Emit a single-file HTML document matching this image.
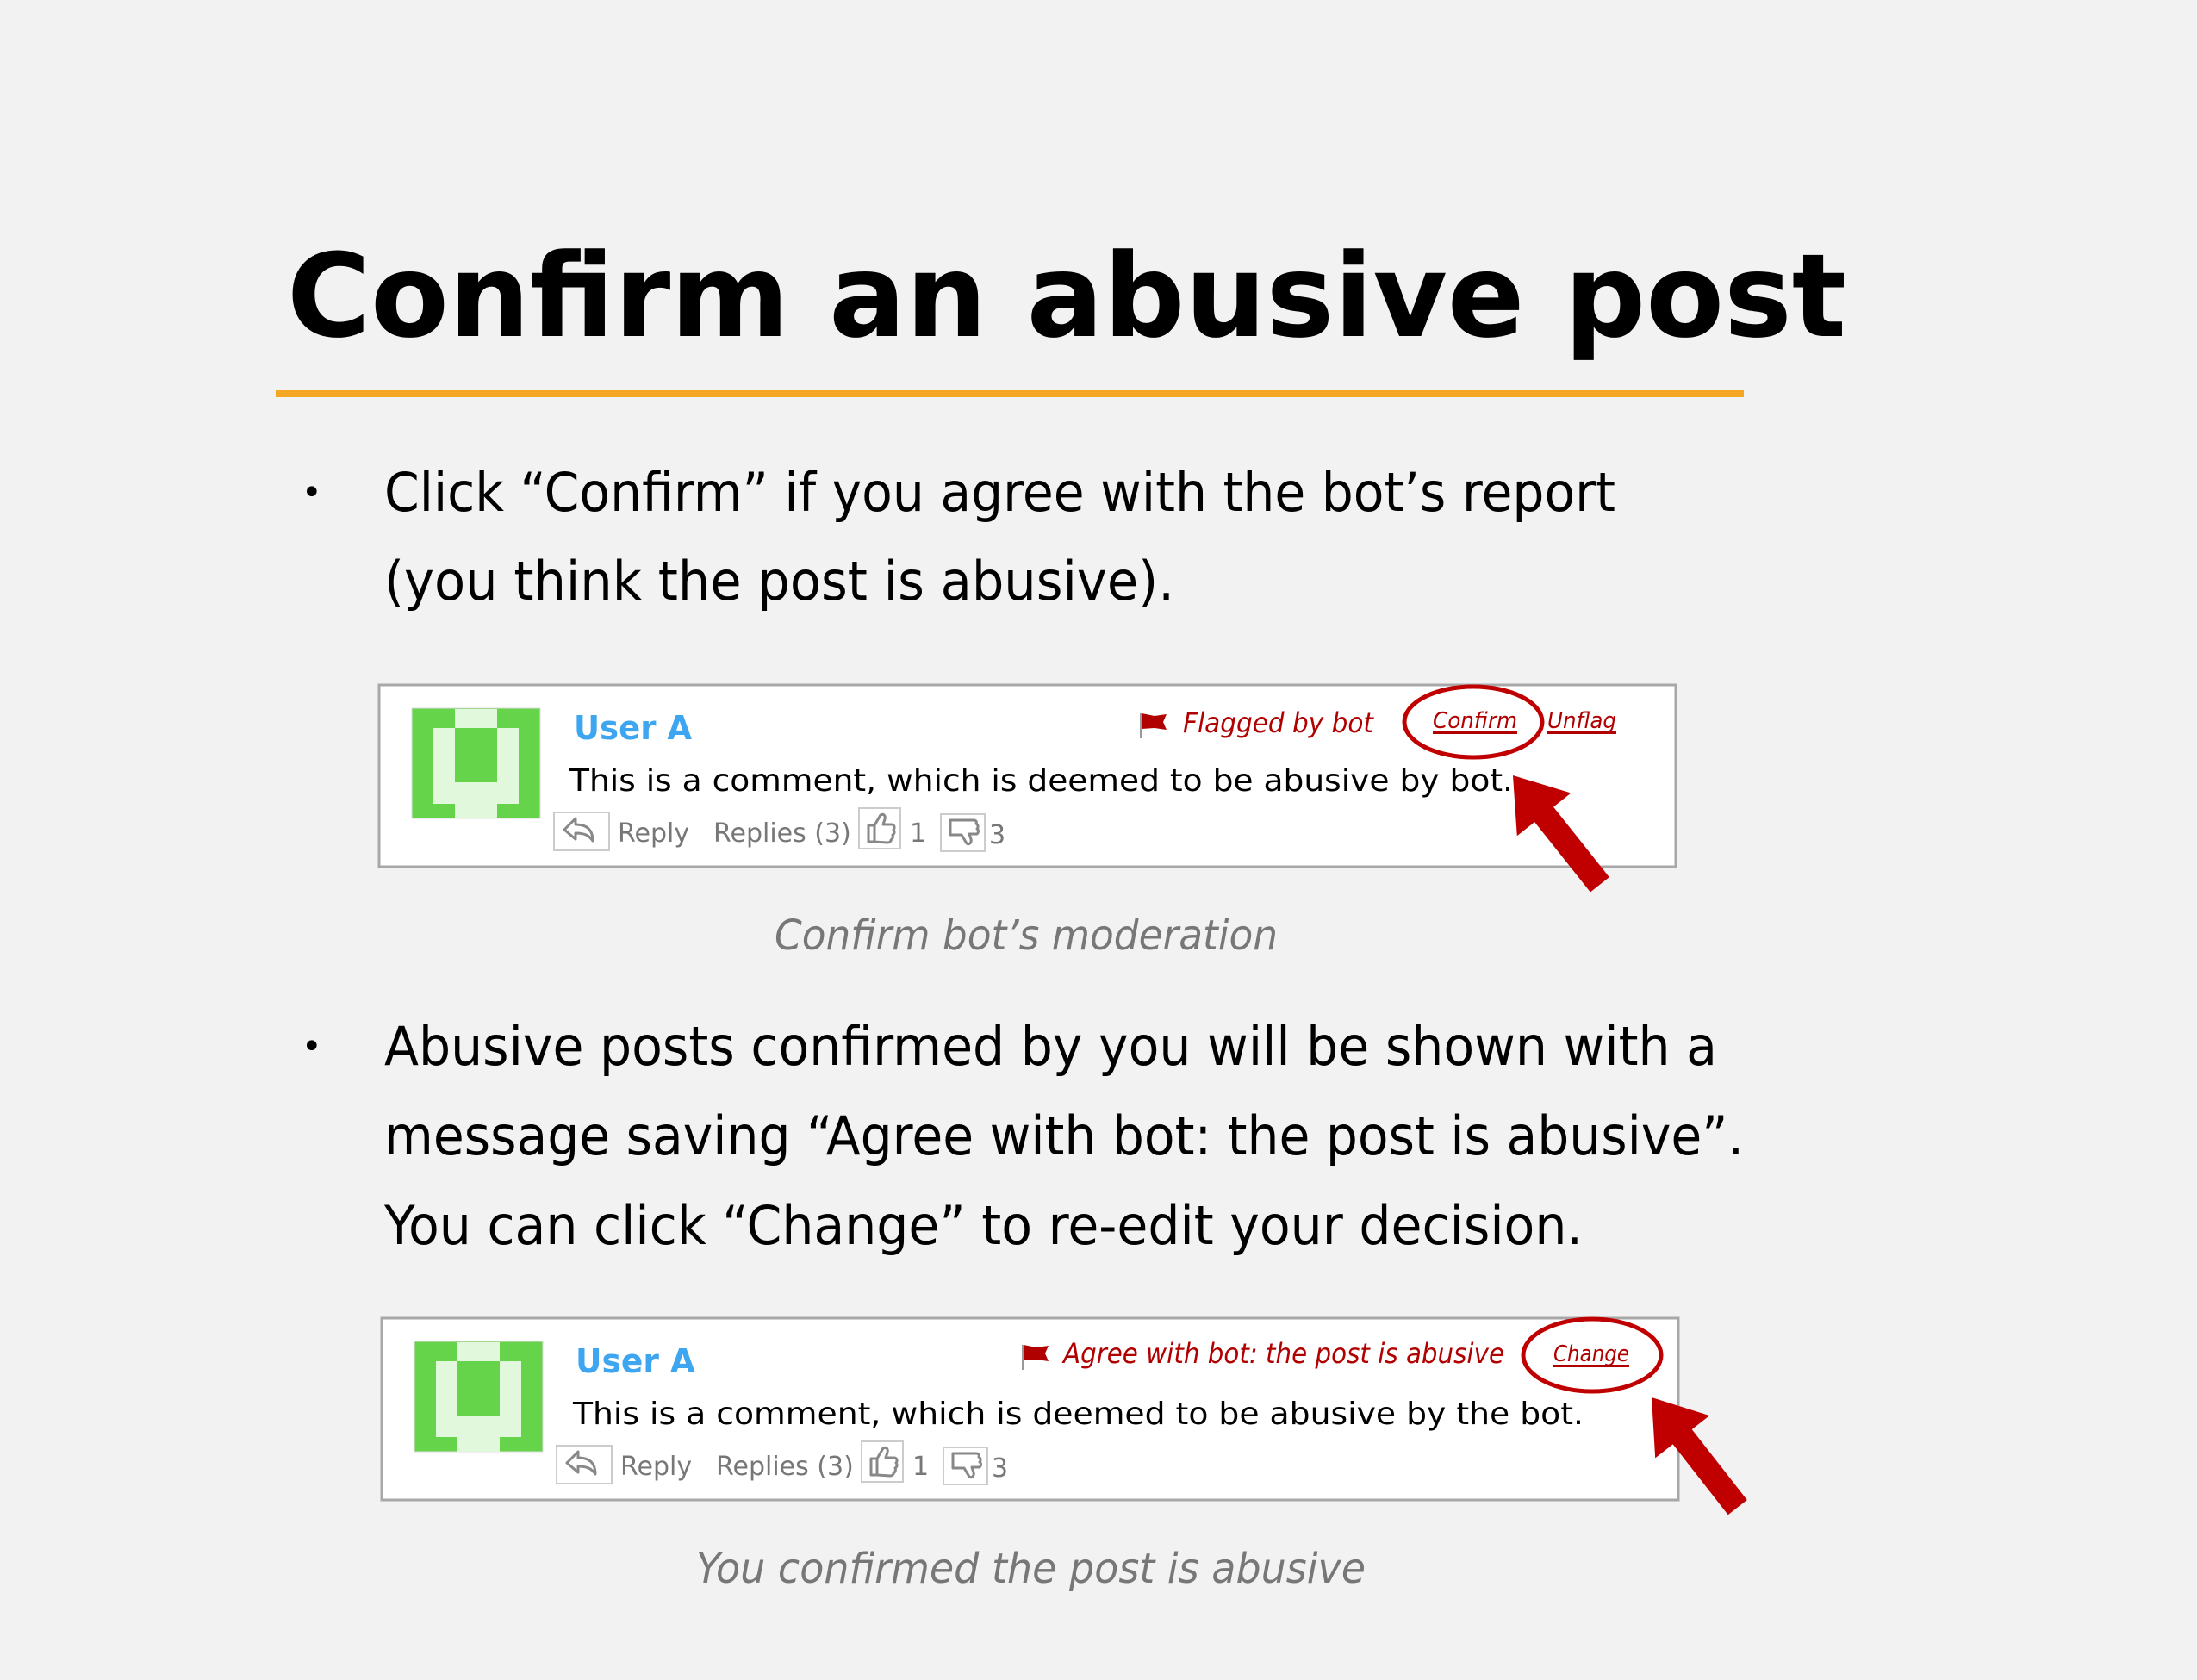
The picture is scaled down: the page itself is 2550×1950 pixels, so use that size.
<!DOCTYPE html>
<html><head><meta charset="utf-8"><style>
html,body{margin:0;padding:0;background:#f2f2f2;}
svg{display:block;}
text{font-family:"DejaVu Sans","Liberation Sans",sans-serif;}
</style></head><body>
<svg width="2550" height="1950" viewBox="0 0 2550 1950" xmlns="http://www.w3.org/2000/svg">
<rect width="2550" height="1950" fill="#f2f2f2"/>
<text x="333" y="390" font-size="134" font-weight="bold" fill="#000" textLength="1810" lengthAdjust="spacingAndGlyphs">Confirm an abusive post</text>
<rect x="320" y="453" width="1704" height="8" fill="#f5a623"/>

<g font-size="62" fill="#000">
<text x="350" y="585" font-size="40">•</text>
<text x="446" y="593" textLength="1429" lengthAdjust="spacingAndGlyphs">Click “Confirm” if you agree with the bot’s report</text>
<text x="446" y="696" textLength="917" lengthAdjust="spacingAndGlyphs">(you think the post is abusive).</text>
<text x="350" y="1228" font-size="40">•</text>
<text x="446" y="1236" textLength="1547" lengthAdjust="spacingAndGlyphs">Abusive posts confirmed by you will be shown with a</text>
<text x="446" y="1340" textLength="1578" lengthAdjust="spacingAndGlyphs">message saving “Agree with bot: the post is abusive”.</text>
<text x="446" y="1444" textLength="1391" lengthAdjust="spacingAndGlyphs">You can click “Change” to re-edit your decision.</text>
</g>

<defs>
<g id="widget">
  <rect x="440" y="795" width="1505" height="211" fill="#fff" stroke="#a8a8a8" stroke-width="3"/>
  <rect x="478" y="822" width="149" height="128" fill="#66d44a" stroke="#ddd" stroke-width="1"/>
  <rect x="528" y="823" width="49" height="22" fill="#e2f8dc"/>
  <rect x="503" y="845" width="25" height="63" fill="#e2f8dc"/>
  <rect x="577" y="845" width="25" height="63" fill="#e2f8dc"/>
  <rect x="503" y="908" width="99" height="25" fill="#e2f8dc"/>
  <rect x="528" y="933" width="49" height="17" fill="#e2f8dc"/>
  <rect x="643" y="943" width="64" height="44" fill="#fff" stroke="#ccc" stroke-width="2"/>
  <path d="M688 976 C688 962 680 957 668 957 L668 950 L655 963 L668 974 L668 967 C679 967 684 970 688 976 Z" fill="none" stroke="#888" stroke-width="3" stroke-linejoin="round"/>
  <g font-size="30" fill="#777">
    <text x="717" y="977">Reply</text>
    <text x="828" y="977">Replies (3)</text>
    <text x="1056" y="977">1</text>
    <text x="1148" y="979">3</text>
  </g>
  <rect x="997" y="938" width="48" height="47" fill="#fff" stroke="#ccc" stroke-width="2"/>
  <path d="M1008 958 L1015 958 L1015 977 L1008 977 Z M1015 958 L1022 946 C1026 944 1028 947 1027 951 L1025 957 L1035 957 C1038 957 1039 961 1037 963 C1039 965 1038 968 1036 969 C1037 971 1036 974 1034 975 C1034 977 1032 978 1030 978 L1015 977" fill="none" stroke="#888" stroke-width="3" stroke-linejoin="round"/>
  <rect x="1092" y="945" width="51" height="43" fill="#fff" stroke="#ccc" stroke-width="2"/>
  <path d="M1103 952 L1130 952 C1133 952 1134 954 1133 956 C1135 957 1136 960 1134 962 C1136 963 1136 966 1134 968 L1125 968 L1127 974 C1128 978 1125 981 1122 979 L1116 969 L1103 969 Z" fill="none" stroke="#888" stroke-width="3" stroke-linejoin="round"/>
</g>
<g id="arrow">
  <polygon points="0,0 58,-40 58,-14 162,-14 162,14 58,14 58,40" fill="#c00000"/>
</g>
</defs>

<use href="#widget"/>
<text x="666" y="858" font-size="38" font-weight="bold" fill="#3ea6f0" textLength="137" lengthAdjust="spacingAndGlyphs">User A</text>
<text x="661" y="918" font-size="36" fill="#000" textLength="1095" lengthAdjust="spacingAndGlyphs">This is a comment, which is deemed to be abusive by bot.</text>
<path d="M1324 828 L1324 857" stroke="#999" stroke-width="2"/>
<path d="M1325 828 L1340 831 L1354 829 L1350 838 L1354 847 L1340 845 L1325 846 Z" fill="#b00000"/>
<text x="1373" y="850" font-size="32" font-style="italic" fill="#b00000" textLength="221" lengthAdjust="spacingAndGlyphs">Flagged by bot</text>
<text x="1663" y="845" font-size="26" font-style="italic" fill="#b00000" textLength="98" lengthAdjust="spacingAndGlyphs">Confirm</text>
<rect x="1663" y="849" width="98" height="3" fill="#b00000"/>
<text x="1796" y="845" font-size="26" font-style="italic" fill="#b00000" textLength="80" lengthAdjust="spacingAndGlyphs">Unflag</text>
<rect x="1796" y="849" width="80" height="3" fill="#b00000"/>
<ellipse cx="1710" cy="838" rx="80" ry="41" fill="none" stroke="#c00000" stroke-width="5"/>
<use href="#arrow" transform="translate(1756,900) rotate(51.5)"/>
<text x="899" y="1102" font-size="48" font-style="italic" fill="#777" textLength="584" lengthAdjust="spacingAndGlyphs">Confirm bot’s moderation</text>

<use href="#widget" transform="translate(3,735)"/>
<text x="668" y="1593" font-size="38" font-weight="bold" fill="#3ea6f0" textLength="139" lengthAdjust="spacingAndGlyphs">User A</text>
<text x="665" y="1653" font-size="36" fill="#000" textLength="1173" lengthAdjust="spacingAndGlyphs">This is a comment, which is deemed to be abusive by the bot.</text>
<path d="M1187 1561 L1187 1590" stroke="#999" stroke-width="2"/>
<path d="M1188 1561 L1203 1564 L1217 1562 L1213 1571 L1217 1580 L1203 1578 L1188 1579 Z" fill="#b00000"/>
<text x="1234" y="1582" font-size="32" font-style="italic" fill="#b00000" textLength="512" lengthAdjust="spacingAndGlyphs">Agree with bot: the post is abusive</text>
<text x="1803" y="1580" font-size="26" font-style="italic" fill="#b00000" textLength="88" lengthAdjust="spacingAndGlyphs">Change</text>
<rect x="1803" y="1584" width="88" height="3" fill="#b00000"/>
<ellipse cx="1848" cy="1573" rx="80" ry="42" fill="none" stroke="#c00000" stroke-width="5"/>
<use href="#arrow" transform="translate(1917,1622) rotate(52)"/>
<text x="808" y="1837" font-size="48" font-style="italic" fill="#777" textLength="777" lengthAdjust="spacingAndGlyphs">You confirmed the post is abusive</text>
</svg>
</body></html>
